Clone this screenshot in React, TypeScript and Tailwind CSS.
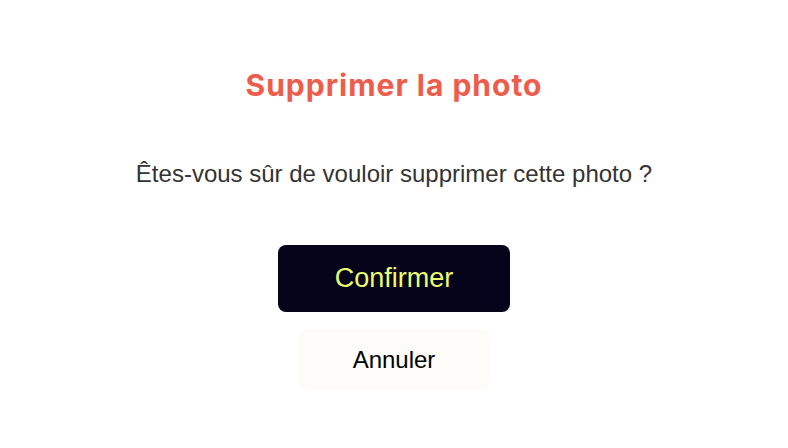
export default function App() {
  return (
    <div className="flex min-h-[448px] w-full flex-col items-center bg-white pt-[63px] font-['Liberation_Sans',Arial,sans-serif]">
      <h1 className="font-['Inter',sans-serif] text-[30px] font-bold leading-[44px] tracking-[1px] text-[#ee5c4b]">
        Supprimer la photo
      </h1>
      <p className="mt-[53px] text-[24px] leading-[28px] text-[#333333]">
        Êtes-vous sûr de vouloir supprimer cette photo ?
      </p>
      <button className="mt-[57px] h-[67px] w-[232px] rounded-[8px] bg-[#05041a] text-[27px] text-[#eaff6b]">
        Confirmer
      </button>
      <button className="mt-[17px] h-[61px] w-[193px] rounded-[10px] bg-[#fdfcf8] text-[24px] text-black">
        Annuler
      </button>
    </div>
  );
}
